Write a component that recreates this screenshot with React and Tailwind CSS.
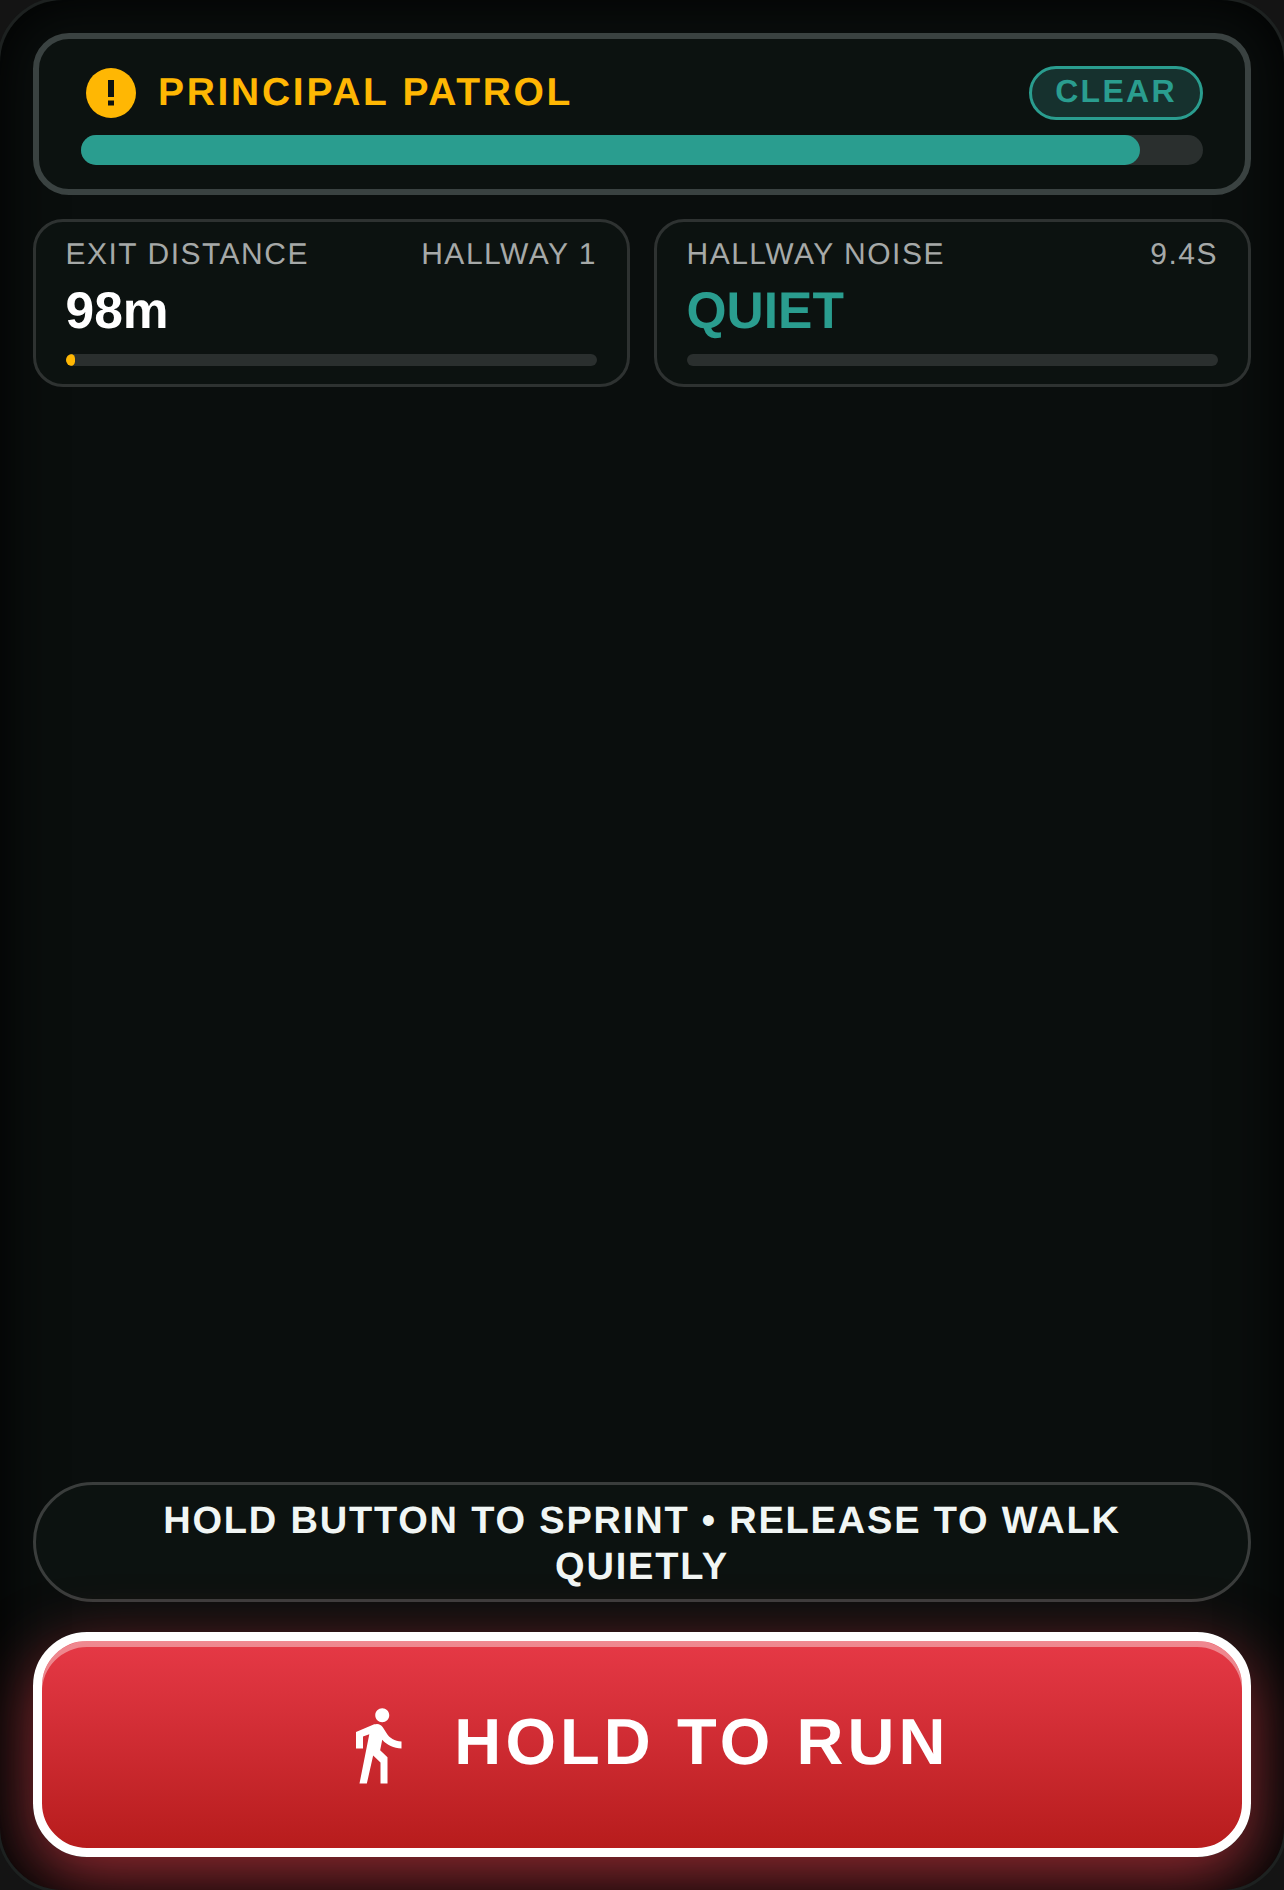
import React from "react";
import { MdDirectionsWalk } from "react-icons/md";

function Stat({ label, side, value, valueClass, fill }) {
  return (
    <div className="flex-1 h-[168px] rounded-[30px] border-[3px] border-[#2e3231] bg-[#0c1210] px-[30px] pt-[15px]">
      <div className="flex justify-between text-[30px] leading-[36px] tracking-[1.5px] text-[#a6a9a8]">
        <span className="-ml-[0.5px]">{label}</span>
        <span>{side}</span>
      </div>
      <div className={`mt-[7px] -ml-[0.5px] text-[51.5px] leading-[60px] font-bold ${valueClass}`}>{value}</div>
      <div className="mt-[14px] h-[12px] rounded-full bg-[#2a2f2e] overflow-hidden">
        {fill ? <div className="h-full w-[9px] rounded-full bg-[#ffb703]" /> : null}
      </div>
    </div>
  );
}

export default function App() {
  return (
    <div className="w-[1284px] h-[1890px] bg-[#141414] overflow-hidden font-['Liberation_Sans',sans-serif] [text-rendering:geometricPrecision]">
      <div className="relative -m-[3px] w-[1290px] h-[1896px] rounded-[66px] border-[3px] border-[#1d2120] bg-[#0a0e0d] overflow-hidden flex flex-col px-[33px] pt-[33px] pb-[33px] shadow-[inset_0_0_60px_#000]">
        <div className="h-[162px] rounded-[36px] border-[6px] border-[#3a4241] bg-[#0c1210] px-[42px] pt-[27px]">
          <div className="h-[54px] flex items-center justify-between pl-[5px]">
            <div className="flex items-center gap-[22px]">
              <svg width="50" height="50" viewBox="0 0 50 50">
                <circle cx="25" cy="25" r="25" fill="#ffb703" />
                <rect x="22" y="12" width="6" height="17" fill="#0c1210" />
                <rect x="22" y="32.5" width="6" height="5" fill="#0c1210" />
              </svg>
              <span className="text-[39px] leading-[54px] font-bold tracking-[2.7px] text-[#ffb703]">PRINCIPAL PATROL</span>
            </div>
            <div className="h-[54px] w-[174px] rounded-full border-[3px] border-[#2a9d8f] bg-[#16312e] flex items-center justify-center pb-[5px] text-[32px] font-bold tracking-[2.3px] text-[#2a9d8f]">
              CLEAR
            </div>
          </div>
          <div className="mt-[15px] h-[30px] rounded-full bg-[#2a2f2e]">
            <div className="h-full w-[94.4%] rounded-full bg-[#2a9d8f]" />
          </div>
        </div>

        <div className="mt-[24px] flex gap-[24px]">
          <Stat label="EXIT DISTANCE" side="HALLWAY 1" value="98m" valueClass="text-white" fill />
          <Stat label="HALLWAY NOISE" side="9.4S" value="QUIET" valueClass="text-[#2a9d8f]" />
        </div>

        <div className="flex-1" />

        <div className="h-[120px] rounded-[60px] border-[3px] border-[#3a3d3c] bg-[#0c1210] px-[90px] pt-[3px] flex items-center justify-center text-center text-[38px] leading-[46px] font-bold tracking-[1.8px] text-[#f1f6f4]">
          HOLD BUTTON TO SPRINT • RELEASE TO WALK QUIETLY
        </div>

        <div className="mt-[30px] h-[225px] rounded-[54px] border-[9px] border-white bg-gradient-to-b from-[#e63946] to-[#b71c1c] flex items-center justify-center gap-[35px] pl-[1px] text-white shadow-[inset_0_6px_0_rgba(255,255,255,0.4),0_21px_66px_rgba(230,57,70,0.62)]">
          <MdDirectionsWalk size={84} />
          <span className="pb-[7px] text-[65px] leading-none font-bold tracking-[4.1px]">HOLD TO RUN</span>
        </div>
      </div>
    </div>
  );
}
